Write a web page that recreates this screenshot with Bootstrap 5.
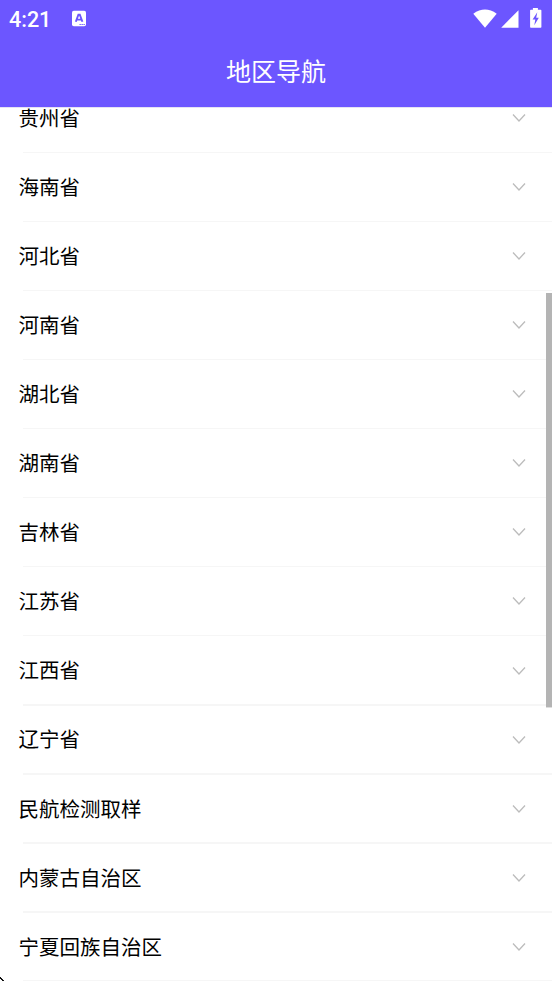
<!DOCTYPE html>
<html lang="zh-CN">
<head>
<meta charset="utf-8">
<meta name="viewport" content="width=device-width, initial-scale=1">
<title>地区导航</title>
<link href="https://cdn.jsdelivr.net/npm/bootstrap@5.3.0/dist/css/bootstrap.min.css" rel="stylesheet">
<style>
  body { font-family: Roboto, "Noto Sans CJK SC", sans-serif; color: #000; }
  .screen { height: 981px; background: #fff; }
  .app-header { height: 107px; background: #6c56ff; z-index: 2; box-shadow: 0 1px 0 #e4e2f4; }
  .status-bar { height: 36px; padding: 0 8px 0 9px; }
  .clock { font-size: 21.5px; font-weight: 500; line-height: 36px; width: 62px; padding-top: 3px; }
  .app-title { height: 71px; font-size: 25px; font-weight: 400; line-height: 73px; }
  .region-list { margin-top: -22.9px; }
  .region-item { height: 69.06px; padding: 0 26px 0 18.5px; font-size: 20.5px; }
  .region-item span { padding-top: 1.6px; }
  .region-item svg { margin-top: -1px; }
  .region-item::after { content: ""; position: absolute; left: 23px; right: 0; bottom: 0; height: 1.5px; background: #f6f6f6; }
  .scroll-thumb { right: 0; top: 293px; width: 6px; height: 414px; background: #b4b4b4; box-shadow: 0 1px 0 #dedede; z-index: 3; }
  .corner-cursor { left: 0; bottom: 0; z-index: 3; }
</style>
</head>
<body>
<div class="screen position-relative overflow-hidden">
  <header class="app-header position-relative text-white">
    <div class="status-bar d-flex align-items-center">
      <span class="clock">4:21</span>
      <svg width="16" height="17" viewBox="0 0 16 17"><rect x="1" y="0.800" width="14" height="15.500" rx="1.800" fill="#fff"/><path d="M4.800 11.800 7.400 4.600h1.400L11.400 11.800M6 9.600h4.300" fill="none" stroke="#6c56ff" stroke-width="1.900"/><path d="M8.500 14.500h6" stroke="#6c56ff" stroke-width="1" stroke-dasharray="1.300 .7"/></svg>
      <svg class="ms-auto" width="72" height="22" viewBox="0 0 72 22"><g fill="#fff"><path d="M1.300 6.700Q13 -1.600 24.700 6.700L13 20.700Z"/><path d="M46.500 3.200v17.500H29.200Z"/><path d="M60.900 1h5v1.700h2.700q.8 0 .8.800v16.400q0 .8-.8.800H58.900q-.8 0-.8-.8V3.500q0-.8.800-.8h2z"/></g><path d="M65.300 5.300 60.600 12.600h2.700L62.300 18.300 66.800 10.700h-2.600Z" fill="#6c56ff"/></svg>
    </div>
    <h1 class="app-title text-center m-0">地区导航</h1>
  </header>

  <svg class="d-none"><symbol id="chevron" viewBox="0 0 14 10"><path d="M1 1.500 7 8l6-6.500" fill="none" stroke="#bcbcbc" stroke-width="1.300"/></symbol></svg>

  <ul class="region-list list-unstyled mb-0">
    <li class="region-item position-relative d-flex align-items-center justify-content-between"><span>贵州省</span><svg width="14" height="10"><use href="#chevron"/></svg></li>
    <li class="region-item position-relative d-flex align-items-center justify-content-between"><span>海南省</span><svg width="14" height="10"><use href="#chevron"/></svg></li>
    <li class="region-item position-relative d-flex align-items-center justify-content-between"><span>河北省</span><svg width="14" height="10"><use href="#chevron"/></svg></li>
    <li class="region-item position-relative d-flex align-items-center justify-content-between"><span>河南省</span><svg width="14" height="10"><use href="#chevron"/></svg></li>
    <li class="region-item position-relative d-flex align-items-center justify-content-between"><span>湖北省</span><svg width="14" height="10"><use href="#chevron"/></svg></li>
    <li class="region-item position-relative d-flex align-items-center justify-content-between"><span>湖南省</span><svg width="14" height="10"><use href="#chevron"/></svg></li>
    <li class="region-item position-relative d-flex align-items-center justify-content-between"><span>吉林省</span><svg width="14" height="10"><use href="#chevron"/></svg></li>
    <li class="region-item position-relative d-flex align-items-center justify-content-between"><span>江苏省</span><svg width="14" height="10"><use href="#chevron"/></svg></li>
    <li class="region-item position-relative d-flex align-items-center justify-content-between"><span>江西省</span><svg width="14" height="10"><use href="#chevron"/></svg></li>
    <li class="region-item position-relative d-flex align-items-center justify-content-between"><span>辽宁省</span><svg width="14" height="10"><use href="#chevron"/></svg></li>
    <li class="region-item position-relative d-flex align-items-center justify-content-between"><span>民航检测取样</span><svg width="14" height="10"><use href="#chevron"/></svg></li>
    <li class="region-item position-relative d-flex align-items-center justify-content-between"><span>内蒙古自治区</span><svg width="14" height="10"><use href="#chevron"/></svg></li>
    <li class="region-item position-relative d-flex align-items-center justify-content-between"><span>宁夏回族自治区</span><svg width="14" height="10"><use href="#chevron"/></svg></li>
  </ul>

  <div class="scroll-thumb position-absolute"></div>
  <svg class="corner-cursor position-absolute" width="4" height="4" viewBox="0 0 4 4"><path d="M0 0h1v1h1v1h1v1h1v1H2V3H1V2H0z" fill="#111"/></svg>
</div>
<script src="https://cdn.jsdelivr.net/npm/bootstrap@5.3.0/dist/js/bootstrap.bundle.min.js"></script>
</body>
</html>
